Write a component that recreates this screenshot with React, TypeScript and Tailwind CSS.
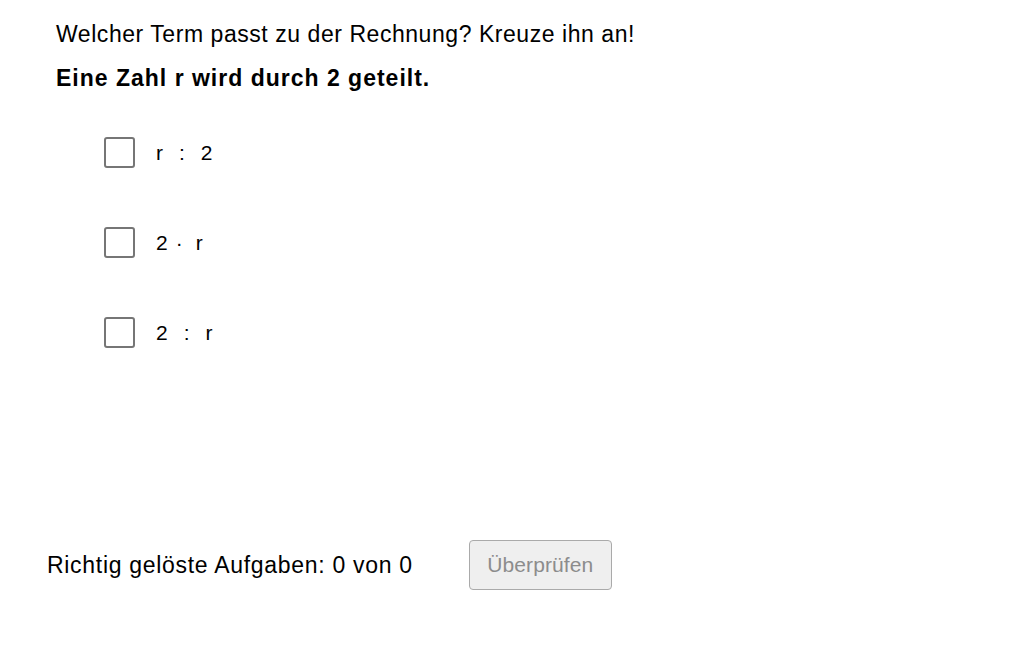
type Term = { left: string; op: string; right: string; opClass: string };

const terms: Term[] = [
  { left: 'r', op: ':', right: '2', opClass: 'mx-[16px]' },
  { left: '2', op: '·', right: 'r', opClass: 'ml-[8px] mr-[13px]' },
  { left: '2', op: ':', right: 'r', opClass: 'mx-[16px]' },
];

const sans = "font-['Liberation_Sans',Arial,sans-serif]";

const Checkbox = () => (
  <span className="block w-[31px] h-[31px] rounded-[3px] border-2 border-[#767676] bg-white" />
);

export default function App() {
  return (
    <div className={`min-h-[645px] w-[1032px] bg-white text-black ${sans}`}>
      <div className="pl-[56px] pt-[19px]">
        <p className="text-[23px] leading-[30px] tracking-[0.55px]">
          Welcher Term passt zu der Rechnung? Kreuze ihn an!
        </p>
        <p className="mt-[14px] text-[23px] leading-[30px] font-bold tracking-[1px]">
          Eine Zahl r wird durch 2 geteilt.
        </p>
      </div>

      <ul className="mt-[44px] pl-[104px] flex flex-col gap-[59px]">
        {terms.map((t, i) => (
          <li key={i} className="flex items-center gap-[21px] h-[31px]">
            <Checkbox />
            <span className="text-[21px] flex">
              <span>{t.left}</span>
              <span className={t.opClass}>{t.op}</span>
              <span>{t.right}</span>
            </span>
          </li>
        ))}
      </ul>

      <div className="mt-[192px] pl-[47px] flex items-center">
        <span className="text-[23px] tracking-[0.7px]">Richtig gelöste Aufgaben: 0 von 0</span>
        <button
          disabled
          className="ml-[56px] w-[143px] h-[50px] rounded-[4px] border border-[#aaaaaa] bg-[#efefef] text-[21px] tracking-[0.1px] text-[#8c8c8c]"
        >
          Überprüfen
        </button>
      </div>
    </div>
  );
}
